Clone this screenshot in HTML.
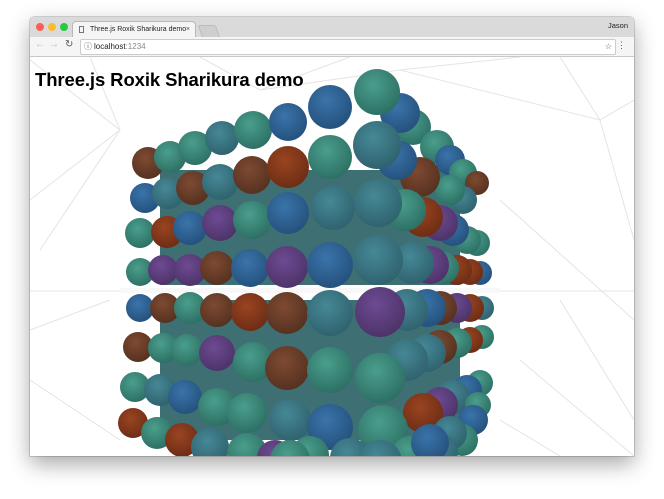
<!DOCTYPE html>
<html><head><meta charset="utf-8"><style>
body{margin:0;width:664px;height:499px;background:#fff;overflow:hidden;font-family:"Liberation Sans",sans-serif;position:relative}
.win{position:absolute;left:30px;top:17px;width:604px;height:439px;border-radius:5px 5px 0 0;box-shadow:0 8px 22px rgba(0,0,0,.35),0 0 0 1px rgba(0,0,0,.15);overflow:hidden;background:#fff}
.tb{position:absolute;left:0;top:0;width:604px;height:20px;background:#dadada}
.dot{position:absolute;top:6px;width:8px;height:8px;border-radius:50%}
.tab{position:absolute;left:42px;top:4px;width:122px;height:17px;background:#f5f5f5;border:1px solid #b8b8b8;border-bottom:none;border-radius:4px 4px 0 0;font-size:7px;line-height:16px;color:#222;white-space:nowrap;overflow:hidden}
.tab2{position:absolute;left:170px;top:8px;width:16px;height:11px;background:#cfcfcf;border:1px solid #bbb;border-radius:2px 2px 0 0;transform:skewX(20deg)}
.bar{position:absolute;left:0;top:20px;width:604px;height:19px;background:#f5f5f5;border-bottom:1px solid #c8c8c8}
.url{position:absolute;left:50px;top:2px;width:534px;height:14px;background:#fff;border:1px solid #ccc;border-radius:2px;font-size:8px;line-height:14px;color:#222}
h1{position:absolute;left:5px;top:52px;margin:0;font-size:18.5px;font-weight:bold;color:#000;z-index:2;letter-spacing:-.1px}
</style></head><body>
<div class="win">
<div class="tb">
<div class="dot" style="left:6px;background:#fc5f57"></div>
<div class="dot" style="left:18px;background:#fdbc2e"></div>
<div class="dot" style="left:30px;background:#2ac940"></div>
<div class="tab"><span style="position:absolute;left:6px;top:4px;width:5px;height:7px;border:1px solid #777;box-sizing:border-box"></span><span style="position:absolute;left:17px">Three.js Roxik Sharikura demo</span><span style="position:absolute;right:5px;color:#555">×</span></div>
<div class="tab2"></div>
<div style="position:absolute;right:6px;top:4px;font-size:7.5px;color:#222">Jason</div>
</div>
<div class="bar">
<span style="position:absolute;left:5px;top:2px;font-size:10px;color:#bbb">←</span>
<span style="position:absolute;left:19px;top:2px;font-size:10px;color:#bbb">→</span>
<span style="position:absolute;left:35px;top:2px;font-size:10px;color:#555">↻</span>
<div class="url"><span style="position:absolute;left:3px;color:#555;font-size:8px">ⓘ</span><span style="position:absolute;left:13px">localhost<span style="color:#888">:1234</span></span><span style="position:absolute;right:3px;color:#555">☆</span></div>
<span style="position:absolute;right:8px;top:3px;font-size:9px;color:#555">⋮</span>
</div>
<h1>Three.js Roxik Sharikura demo</h1>
</div>
<svg width="664" height="499" style="position:absolute;left:0;top:0" viewBox="0 0 664 499">
<defs>
<clipPath id="c"><rect x="30" y="57" width="604" height="399"/></clipPath>
<radialGradient id="t" cx=".42" cy=".35" r=".7"><stop offset="0" stop-color="#4a9e8c"/><stop offset="1" stop-color="#2b6d62"/></radialGradient>
<radialGradient id="b" cx=".42" cy=".35" r=".7"><stop offset="0" stop-color="#3a74aa"/><stop offset="1" stop-color="#234f7a"/></radialGradient>
<radialGradient id="s" cx=".42" cy=".35" r=".7"><stop offset="0" stop-color="#468896"/><stop offset="1" stop-color="#2e606c"/></radialGradient>
<radialGradient id="r" cx=".42" cy=".35" r=".7"><stop offset="0" stop-color="#7e4a32"/><stop offset="1" stop-color="#53301f"/></radialGradient>
<radialGradient id="o" cx=".42" cy=".35" r=".7"><stop offset="0" stop-color="#9a4421"/><stop offset="1" stop-color="#6a2c14"/></radialGradient>
<radialGradient id="p" cx=".42" cy=".35" r=".7"><stop offset="0" stop-color="#6d4a92"/><stop offset="1" stop-color="#4b3266"/></radialGradient>
</defs>
<g clip-path="url(#c)">
<g stroke="#e4e4e4" stroke-width="1" fill="none">
<path d="M30 60 L120 130 L40 250 M90 57 L120 130 L30 200 M200 57 L260 90 L350 57 M260 90 L400 70 L520 57 M400 70 L600 120 L634 100 M560 57 L600 120 L634 240 M500 200 L634 320 M30 291 L634 291 M560 300 L634 420 M30 380 L120 440 M520 360 L634 456 M500 420 L560 456 M30 330 L110 300"/>
</g>
<rect x="160" y="170" width="300" height="115" fill="#3e6f72"/>
<rect x="160" y="300" width="300" height="140" fill="#3e6f72"/>
<g>
<circle cx="413" cy="127" r="18" fill="url(#t)"/><circle cx="437" cy="147" r="17" fill="url(#t)"/><circle cx="450" cy="160" r="15" fill="url(#b)"/><circle cx="463" cy="173" r="14" fill="url(#t)"/><circle cx="477" cy="183" r="12" fill="url(#r)"/>
<circle cx="400" cy="113" r="20" fill="url(#b)"/>
<circle cx="148" cy="163" r="16" fill="url(#r)"/><circle cx="170" cy="157" r="16" fill="url(#t)"/><circle cx="195" cy="148" r="17" fill="url(#t)"/><circle cx="222" cy="138" r="17" fill="url(#s)"/><circle cx="253" cy="130" r="19" fill="url(#t)"/><circle cx="288" cy="122" r="19" fill="url(#b)"/><circle cx="330" cy="107" r="22" fill="url(#b)"/><circle cx="377" cy="92" r="23" fill="url(#t)"/>
<circle cx="463" cy="200" r="14" fill="url(#s)"/><circle cx="450" cy="190" r="15" fill="url(#t)"/><circle cx="420" cy="177" r="20" fill="url(#r)"/><circle cx="397" cy="160" r="20" fill="url(#b)"/>
<circle cx="145" cy="198" r="15" fill="url(#b)"/><circle cx="168" cy="193" r="16" fill="url(#s)"/><circle cx="193" cy="188" r="17" fill="url(#r)"/><circle cx="220" cy="182" r="18" fill="url(#s)"/><circle cx="252" cy="175" r="19" fill="url(#r)"/><circle cx="288" cy="167" r="21" fill="url(#o)"/><circle cx="330" cy="157" r="22" fill="url(#t)"/><circle cx="377" cy="145" r="24" fill="url(#s)"/>
<circle cx="477" cy="243" r="13" fill="url(#t)"/><circle cx="467" cy="240" r="14" fill="url(#t)"/><circle cx="453" cy="230" r="16" fill="url(#b)"/><circle cx="440" cy="223" r="18" fill="url(#p)"/><circle cx="423" cy="217" r="20" fill="url(#o)"/><circle cx="405" cy="210" r="21" fill="url(#t)"/>
<circle cx="140" cy="233" r="15" fill="url(#t)"/><circle cx="167" cy="232" r="16" fill="url(#o)"/><circle cx="190" cy="228" r="17" fill="url(#b)"/><circle cx="220" cy="223" r="18" fill="url(#p)"/><circle cx="252" cy="220" r="19" fill="url(#t)"/><circle cx="288" cy="213" r="21" fill="url(#b)"/><circle cx="333" cy="208" r="22" fill="url(#s)"/><circle cx="378" cy="203" r="24" fill="url(#s)"/>
<circle cx="480" cy="273" r="12" fill="url(#b)"/><circle cx="470" cy="272" r="13" fill="url(#o)"/><circle cx="457" cy="270" r="15" fill="url(#o)"/><circle cx="443" cy="268" r="16" fill="url(#t)"/><circle cx="430" cy="265" r="19" fill="url(#p)"/><circle cx="413" cy="263" r="21" fill="url(#s)"/>
<circle cx="140" cy="272" r="14" fill="url(#t)"/><circle cx="163" cy="270" r="15" fill="url(#p)"/><circle cx="190" cy="270" r="16" fill="url(#p)"/><circle cx="217" cy="268" r="17" fill="url(#r)"/><circle cx="250" cy="268" r="19" fill="url(#b)"/><circle cx="287" cy="267" r="21" fill="url(#p)"/><circle cx="330" cy="265" r="23" fill="url(#b)"/><circle cx="378" cy="260" r="25" fill="url(#s)"/>
</g>
<rect x="120" y="288" width="380" height="5" fill="#f8f8f8"/>
<g>
<circle cx="482" cy="337" r="12" fill="url(#t)"/><circle cx="470" cy="340" r="13" fill="url(#o)"/><circle cx="457" cy="343" r="15" fill="url(#t)"/><circle cx="440" cy="347" r="17" fill="url(#r)"/><circle cx="427" cy="353" r="19" fill="url(#s)"/><circle cx="407" cy="360" r="21" fill="url(#s)"/>
<circle cx="482" cy="308" r="12" fill="url(#s)"/><circle cx="470" cy="308" r="14" fill="url(#o)"/><circle cx="457" cy="308" r="15" fill="url(#p)"/><circle cx="440" cy="308" r="17" fill="url(#r)"/><circle cx="427" cy="308" r="19" fill="url(#b)"/><circle cx="407" cy="310" r="21" fill="url(#s)"/>
<circle cx="140" cy="308" r="14" fill="url(#b)"/><circle cx="165" cy="308" r="15" fill="url(#r)"/><circle cx="190" cy="308" r="16" fill="url(#t)"/><circle cx="217" cy="310" r="17" fill="url(#r)"/><circle cx="250" cy="312" r="19" fill="url(#o)"/><circle cx="287" cy="313" r="21" fill="url(#r)"/><circle cx="330" cy="313" r="23" fill="url(#s)"/><circle cx="380" cy="312" r="25" fill="url(#p)"/>
<circle cx="138" cy="347" r="15" fill="url(#r)"/><circle cx="163" cy="348" r="15" fill="url(#t)"/><circle cx="187" cy="350" r="16" fill="url(#t)"/><circle cx="217" cy="353" r="18" fill="url(#p)"/><circle cx="253" cy="362" r="20" fill="url(#t)"/><circle cx="287" cy="368" r="22" fill="url(#r)"/><circle cx="330" cy="370" r="23" fill="url(#t)"/><circle cx="380" cy="378" r="25" fill="url(#t)"/>
<circle cx="480" cy="383" r="13" fill="url(#t)"/><circle cx="467" cy="390" r="15" fill="url(#b)"/><circle cx="453" cy="397" r="17" fill="url(#s)"/><circle cx="440" cy="405" r="18" fill="url(#p)"/><circle cx="423" cy="413" r="20" fill="url(#o)"/>
<circle cx="135" cy="387" r="15" fill="url(#t)"/><circle cx="160" cy="390" r="16" fill="url(#s)"/><circle cx="185" cy="397" r="17" fill="url(#b)"/><circle cx="217" cy="407" r="19" fill="url(#t)"/><circle cx="247" cy="413" r="20" fill="url(#t)"/><circle cx="290" cy="420" r="21" fill="url(#s)"/><circle cx="330" cy="427" r="23" fill="url(#b)"/><circle cx="383" cy="430" r="25" fill="url(#t)"/>
<circle cx="478" cy="405" r="13" fill="url(#t)"/><circle cx="473" cy="420" r="15" fill="url(#b)"/><circle cx="462" cy="440" r="16" fill="url(#t)"/><circle cx="450" cy="433" r="17" fill="url(#s)"/>
<circle cx="133" cy="423" r="15" fill="url(#o)"/><circle cx="157" cy="433" r="16" fill="url(#t)"/><circle cx="182" cy="440" r="17" fill="url(#o)"/><circle cx="210" cy="447" r="19" fill="url(#s)"/><circle cx="247" cy="453" r="20" fill="url(#t)"/>
<circle cx="310" cy="455" r="19" fill="url(#t)"/><circle cx="350" cy="458" r="20" fill="url(#s)"/><circle cx="410" cy="455" r="19" fill="url(#t)"/><circle cx="440" cy="452" r="18" fill="url(#s)"/><circle cx="275" cy="458" r="18" fill="url(#p)"/>
<circle cx="430" cy="443" r="19" fill="url(#b)"/>
<circle cx="290" cy="460" r="20" fill="url(#t)"/><circle cx="380" cy="462" r="22" fill="url(#s)"/>
</g>
</g>
</svg>
</body></html>
